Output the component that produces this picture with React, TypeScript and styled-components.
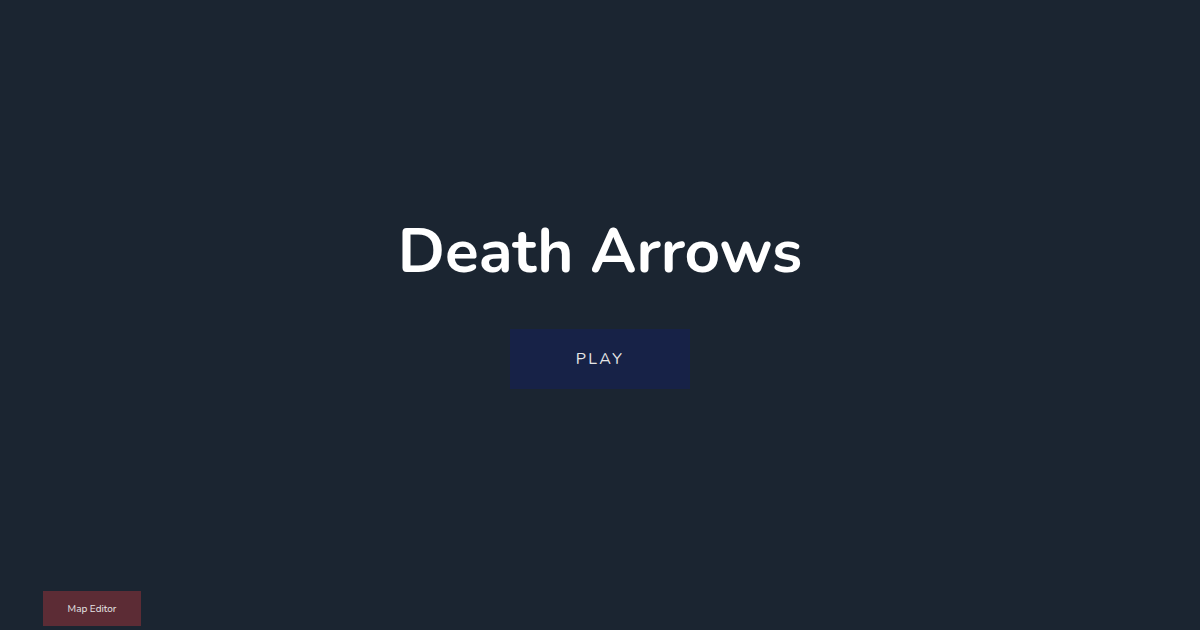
import React from "react";
import styled, { createGlobalStyle } from "styled-components";

const Global = createGlobalStyle`
  html, body { margin: 0; padding: 0; background: #1b2531; }
  body { font-family: "Nunito", "Noto Sans", "Open Sans", sans-serif; }
`;

const Page = styled.div`
  width: 1200px;
  height: 630px;
  background: #1b2531;
  display: flex;
  flex-direction: column;
  position: relative;
  overflow: hidden;
`;

const Center = styled.div`
  flex: 1;
  display: flex;
  flex-direction: column;
  align-items: center;
  padding-top: 206px;
`;

const Title = styled.h1`
  margin: 0;
  color: #ffffff;
  font-family: "Nunito", "Noto Sans", sans-serif;
  font-weight: 700;
  font-size: 62px;
  line-height: 92px;
  letter-spacing: 0;
`;

const PlayButton = styled.button`
  margin-top: 31px;
  width: 180px;
  height: 60px;
  border: none;
  background: #172247;
  color: #e6e6e6;
  font-family: "Nunito", "Noto Sans", sans-serif;
  font-size: 16px;
  letter-spacing: 2.5px;
  cursor: pointer;
`;

const Footer = styled.div`
  padding: 0 0 4px 43px;
`;

const EditorButton = styled.button`
  width: 98px;
  height: 35px;
  border: none;
  background: #5c2c35;
  color: #e6e6e6;
  font-family: "Nunito", "Noto Sans", sans-serif;
  font-size: 10px;
  cursor: pointer;
`;

export default function App() {
  return (
    <Page>
      <Global />
      <Center>
        <Title>Death Arrows</Title>
        <PlayButton>PLAY</PlayButton>
      </Center>
      <Footer>
        <EditorButton>Map Editor</EditorButton>
      </Footer>
    </Page>
  );
}
